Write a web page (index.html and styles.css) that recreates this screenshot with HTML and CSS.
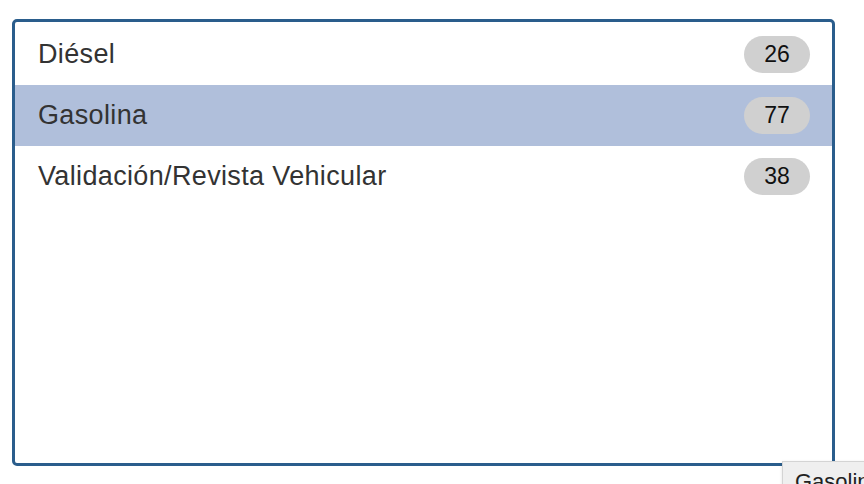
FILE: index.html
```html
<!DOCTYPE html>
<html lang="es">
<head>
<meta charset="utf-8">
<link rel="stylesheet" href="styles.css">
</head>
<body>
<div class="list">
  <div class="row">
    <span class="label">Diésel</span>
    <span class="badge">26</span>
  </div>
  <div class="row selected">
    <span class="label">Gasolina</span>
    <span class="badge">77</span>
  </div>
  <div class="row">
    <span class="label">Validación/Revista Vehicular</span>
    <span class="badge">38</span>
  </div>
</div>
<div class="tooltip">Gasolina</div>
</body>
</html>
```

FILE: styles.css
```css
html, body {
  margin: 0;
  padding: 0;
  background: #ffffff;
  overflow: hidden;
}
body {
  width: 864px;
  height: 484px;
  position: relative;
  font-family: "Liberation Sans", Arial, Helvetica, sans-serif;
}
.list {
  position: absolute;
  left: 12px;
  top: 19px;
  width: 817px;
  height: 439px;
  border: 3px solid #2a5d8c;
  border-radius: 5px;
  padding-top: 2px;
  box-sizing: content-box;
}
.row {
  display: flex;
  align-items: center;
  justify-content: space-between;
  height: 61px;
  padding: 0 22px 0 23px;
}
.row.selected {
  background: #b0bfdb;
}
.label {
  font-size: 27px;
  letter-spacing: 0.35px;
  color: #333333;
}
.badge {
  background: #d0d0d0;
  color: #111111;
  font-size: 23px;
  width: 66px;
  height: 37px;
  border-radius: 19px;
  display: flex;
  align-items: center;
  justify-content: center;
}
.tooltip {
  position: absolute;
  left: 782px;
  top: 461px;
  background: #efefef;
  border: 1px solid #d4d4d4;
  padding: 7px 12px;
  font-size: 22px;
  color: #222222;
  white-space: nowrap;
  box-shadow: 0 1px 3px rgba(0,0,0,0.12);
}
```
